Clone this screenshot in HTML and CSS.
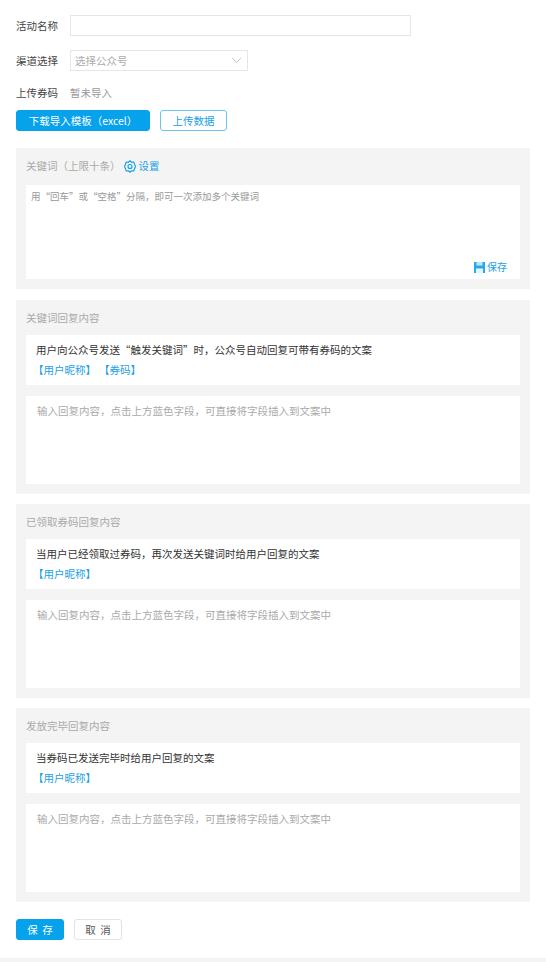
FILE: index.html
```html
<!DOCTYPE html>
<html lang="zh-CN">
<head>
  <meta charset="UTF-8" />
  <meta name="viewport" content="width=device-width, initial-scale=1.0" />
  <title>活动设置</title>
  <link rel="stylesheet" href="styles.css">
</head>
<body>
  <div class="form-row name-row">
    <label>活动名称</label>
    <div class="input"></div>
  </div>
  <div class="form-row channel-row">
    <label>渠道选择</label>
    <div class="select">
      <span>选择公众号</span>
      <svg width="11" height="7" viewBox="0 0 11 7"><path d="M1 1l4.5 4.5L10 1" fill="none" stroke="#c4c4c4" stroke-width="1"/></svg>
    </div>
  </div>
  <div class="form-row upload-row">
    <label>上传券码</label>
    <span class="muted">暂未导入</span>
  </div>
  <div class="upload-btns">
    <button class="btn primary wide">下载导入模板（excel）</button>
    <button class="btn outline">上传数据</button>
  </div>

  <div class="panel keyword-panel">
    <div class="panel-title">
      关键词（上限十条）
      <a class="link setting">
        <svg width="12" height="13" viewBox="0 0 24 26"><path d="M12 1.500l3 3 4.500-.5 1.500 4.500 2 4.500-2 4.500-1.500 4.500-4.500-.5-3 3-3-3-4.500.5-1.500-4.500-2-4.500 2-4.500L4.500 4l4.500.5z" fill="none" stroke="#0d9fe8" stroke-width="2.200" stroke-linejoin="round"/><circle cx="12" cy="13" r="4" fill="none" stroke="#0d9fe8" stroke-width="2.200"/></svg>
        设置
      </a>
    </div>
    <div class="keyword-box">
      <p class="keyword-tip">用“回车”或“空格”分隔，即可一次添加多个关键词</p>
      <a class="link save-link">
        <svg width="11" height="11" viewBox="0 0 11 11"><path d="M0 0h11v11H0z" fill="#29a9ea"/><path d="M2.500 0h6v3.500h-6z" fill="#bfe4f8"/><path d="M2 6.500h7V11H2z" fill="#e4f4fc"/></svg>
        保存
      </a>
    </div>
  </div>

  <div class="panel reply-panel">
    <div class="panel-title">关键词回复内容</div>
    <div class="hint">
      <p>用户向公众号发送“触发关键词”时，公众号自动回复可带有券码的文案</p>
      <div class="fields"><a class="link">【用户昵称】</a><a class="link">【券码】</a></div>
    </div>
    <div class="reply-box">输入回复内容，点击上方蓝色字段，可直接将字段插入到文案中</div>
  </div>

  <div class="panel reply-panel">
    <div class="panel-title">已领取券码回复内容</div>
    <div class="hint">
      <p>当用户已经领取过券码，再次发送关键词时给用户回复的文案</p>
      <div class="fields"><a class="link">【用户昵称】</a></div>
    </div>
    <div class="reply-box">输入回复内容，点击上方蓝色字段，可直接将字段插入到文案中</div>
  </div>

  <div class="panel reply-panel">
    <div class="panel-title">发放完毕回复内容</div>
    <div class="hint">
      <p>当券码已发送完毕时给用户回复的文案</p>
      <div class="fields"><a class="link">【用户昵称】</a></div>
    </div>
    <div class="reply-box">输入回复内容，点击上方蓝色字段，可直接将字段插入到文案中</div>
  </div>

  <div class="actions">
    <button class="btn primary small">保 存</button>
    <button class="btn plain small">取 消</button>
  </div>
  <div class="bottom-strip"></div>
</body>
</html>
```

FILE: styles.css
```css
* {
  box-sizing: border-box;
}

html, body {
  height: 962px;
  overflow: hidden;
}

body {
  margin: 0;
  padding: 15px 16px 0;
  background: #fff;
  color: #333;
  font-family: "Noto Sans CJK SC", "Noto Sans", sans-serif;
  font-size: 10.5px;
  line-height: 16px;
}

p {
  margin: 0;
}

.form-row {
  display: flex;
  align-items: center;
}

.form-row label {
  width: 54px;
  flex: none;
  color: #444;
}

.name-row {
  height: 21px;
}

.channel-row {
  height: 21px;
  margin-top: 14px;
}

.upload-row {
  height: 16px;
  margin-top: 14px;
}

.input {
  width: 341px;
  height: 21px;
  border: 1px solid #e6e6e6;
}

.select {
  width: 178px;
  height: 21px;
  padding: 0 5px 0 4px;
  border: 1px solid #e6e6e6;
  color: #aaa;
  display: flex;
  align-items: center;
  justify-content: space-between;
}

.muted {
  color: #999;
}

.upload-btns {
  display: flex;
  gap: 10px;
  margin-top: 9px;
}

.btn {
  height: 21px;
  padding: 0;
  border-radius: 3px;
  font-family: inherit;
  font-size: 10.5px;
  line-height: 19px;
}

.primary {
  background: #06a2ec;
  border: 1px solid #06a2ec;
  color: #fff;
}

.outline {
  width: 67px;
  background: #fff;
  border: 1px solid #6cc4f2;
  color: #1a9fe5;
}

.plain {
  background: #fff;
  border: 1px solid #e3e3e3;
  color: #555;
}

.wide {
  width: 134px;
}

.small {
  width: 48px;
  word-spacing: 2px;
}

.panel {
  width: 514px;
  padding: 0 10px;
  background: #f4f4f4;
}

.panel-title {
  color: #aaa;
  display: flex;
  align-items: center;
}

.link {
  color: #1a9fe5;
}

.setting {
  display: inline-flex;
  align-items: center;
  gap: 3px;
  margin-left: 3px;
}

.keyword-panel {
  height: 141px;
  margin-top: 17px;
  padding-top: 10px;
}

.keyword-box {
  height: 94px;
  margin-top: 11px;
  padding: 3px 4px 4px 5px;
  background: #fff;
  display: flex;
  flex-direction: column;
  justify-content: space-between;
}

.keyword-tip {
  color: #999;
  font-size: 9.5px;
}

.save-link {
  align-self: flex-end;
  display: inline-flex;
  align-items: center;
  gap: 2px;
  margin-right: 9px;
  font-size: 10px;
}

.reply-panel {
  height: 194px;
  margin-top: 10px;
  padding-top: 10px;
}

.keyword-panel + .reply-panel {
  margin-top: 11px;
}

.reply-panel .hint {
  height: 50px;
  margin-top: 9px;
  padding: 7px 10px 0;
  background: #fff;
  color: #333;
}

.fields {
  display: flex;
  gap: 3px;
  margin-top: 4px;
  margin-left: -3px;
}

.reply-box {
  height: 88px;
  margin-top: 11px;
  padding: 7px 11px;
  background: #fff;
  color: #aaa;
}

.actions {
  display: flex;
  gap: 10px;
  margin-top: 17px;
}

.bottom-strip {
  height: 4px;
  margin: 18px -16px 0;
  background: #f4f4f4;
}
```
